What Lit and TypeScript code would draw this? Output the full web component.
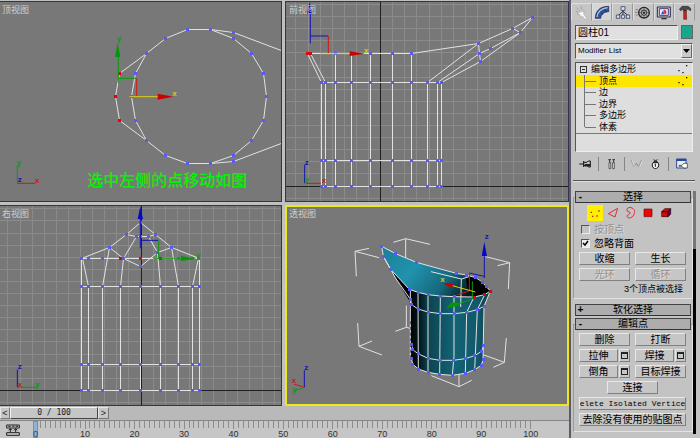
import { LitElement, html, svg, css } from "lit";
import { customElement, property } from "lit/decorators.js";
import { classMap } from "lit/directives/class-map.js";

type Pt = [number, number];

// Drawings use three units to a pixel; snap puts a coordinate on a pixel centre.
const snap = (v: number) => Math.floor(v / 3) * 3 + 1.5;
const snapAll = (pts: Pt[]): Pt[] => pts.map(([x, y]) => [snap(x), snap(y)]);
const join = (pts: Pt[]) => pts.map((p) => p.join(",")).join(" ");
const line = (pts: Pt[], cls = "wire") => svg`<polyline class=${cls} points=${join(snapAll(pts))}></polyline>`;
const dots = (pts: Pt[], cls = "vertex") =>
  snapAll(pts).map(([x, y]) => svg`<rect class=${cls} x=${x - 4.5} y=${y - 4.5} width="9" height="9"></rect>`);

const grid = (ox: number, oy: number) => {
  const out = [];
  for (let i = -30; i <= 40; i++) {
    if (i === 0) continue;
    const x = snap(ox + i * 36.3);
    const y = snap(oy + i * 36.3);
    out.push(svg`<path class="grid" d="M${x} -1500V2500M-1500 ${y}H2500"></path>`);
  }
  out.push(svg`<path class="axis" d="M${snap(ox)} -1500V2500M-1500 ${snap(oy)}H2500"></path>`);
  return out;
};

const ring: Pt[] = [
  [394, 290], [405, 220], [440, 159], [495, 115], [562, 89], [632, 89], [699, 115], [753, 159], [789, 220],
  [799, 290], [789, 361], [753, 422], [699, 466], [632, 491], [562, 491], [495, 466], [440, 422], [405, 361],
];

const topView = () => svg`
  ${line([...ring, ring[0]])}
  ${line([[440, 159], [358, 220], [346, 290], [358, 361], [440, 422]])}
  ${line([[632, 89], [699, 96], [860, 158]])}
  ${line([[632, 491], [699, 485], [860, 424]])}
  ${dots([...ring, [699, 96], [699, 485]])}
  ${dots([[358, 220], [346, 290], [358, 361]], "picked")}
  <path class="ln green" d="M355 250V160M355 235H409"></path>
  <path class="ln red" d="M410 235V290"></path>
  <path class="ln yellow" d="M388 290H475"></path>
  <path class="fill-green" d="M353 128L345 171H361Z"></path>
  <path class="fill-red" d="M520 290L473 281V299Z"></path>
  <text class="mark green-text" x="351" y="124">y</text>
  <text class="mark yellow-text" x="517" y="288">x</text>
  <path class="ln green" d="M52 549V495"></path>
  <path class="ln red" d="M52 550H106"></path>
  <text class="mark green-text" x="50" y="494">y</text>
  <text class="mark red-text" x="105" y="549">x</text>
  <text class="mark blue-text" x="53" y="547">z</text>
  <text class="note" x="262" y="559">选中左侧的点移动如图</text>`;

const frontXs = [112, 123, 153, 202, 260, 324, 382, 430, 461, 472];
const frontView = () => svg`
  ${grid(290, 558)}
  ${frontXs.map((x) => line([[x, 247], [x, 558]]))}
  ${[153, 202, 260, 324, 382].map((x) => line([[x, 161], [x, 247]]))}
  ${line([[70, 161], [382, 161], [584, 129], [686, 86], [745, 51], [710, 96], [590, 185], [472, 247]])}
  ${[247, 481, 558].map((y) => line([[112, y], [472, y]]))}
  ${line([[70, 161], [112, 247]])} ${line([[80, 161], [123, 247]])}
  ${line([[430, 247], [584, 129], [587, 161], [590, 185]])}
  ${line([[461, 247], [587, 161], [618, 145], [710, 96], [686, 86]])}
  ${[247, 481, 558].map((y) => dots(frontXs.map((x): Pt => [x, y])))}
  ${dots([[153, 161], [260, 161], [324, 161], [382, 161], [584, 129], [587, 161], [590, 185], [618, 145], [710, 96], [686, 86], [745, 51]])}
  ${dots([[70, 161], [80, 161]], "picked")}
  <path class="ln blue" d="M79 130V40M79 108H132"></path>
  <path class="ln red" d="M133 108V160"></path>
  <path class="ln yellow" d="M108 161H200"></path>
  <path class="fill-blue" d="M77 6L69 42H86Z"></path>
  <path class="fill-red" d="M243 161L197 154V168Z"></path>
  <text class="mark yellow-text" x="240" y="160">x</text>
  <path class="ln blue" d="M62 549V494"></path>
  <path class="ln red" d="M62 550H110"></path>
  <text class="mark blue-text" x="62" y="494">z</text>
  <text class="mark red-text" x="113" y="549">x</text>
  <text class="mark green-text" x="62" y="547">y</text>`;

const sideXs = [245, 266, 307, 361, 421, 482, 536, 577, 598];
const sideView = () => svg`
  ${grid(423, 562)}
  ${sideXs.map((x) => line([[x, 251], [x, 562]]))}
  ${[251, 485, 562].map((y) => line([[245, y], [598, y]]))}
  ${line([[245, 166], [598, 166]])}
  ${line([[245, 251], [245, 166], [328, 133], [379, 93], [421, 58], [467, 93], [515, 133], [598, 166], [598, 251]])}
  ${line([[248, 166], [266, 251]])} ${line([[595, 166], [577, 251]])}
  ${line([[328, 133], [307, 251]])} ${line([[515, 133], [536, 251]])}
  ${line([[328, 133], [371, 166], [421, 189], [471, 149], [515, 133]])}
  ${line([[361, 251], [371, 166], [410, 99], [379, 93]])}
  ${line([[482, 251], [471, 149], [446, 99], [467, 93]])}
  ${line([[410, 99], [446, 99]])}
  ${[251, 485, 562].map((y) => dots(sideXs.map((x): Pt => [x, y])))}
  ${dots([[245, 166], [266, 166], [307, 166], [371, 166], [536, 166], [577, 166], [596, 166], [328, 133], [515, 133], [379, 93], [467, 93], [410, 99], [446, 99], [421, 58], [421, 99], [471, 149], [421, 189]])}
  ${dots([[361, 166], [421, 166], [482, 166]], "picked")}
  <path class="ln blue" d="M421 136V46M421 112H475"></path>
  <path class="ln green" d="M476 112V165M460 166H545"></path>
  <path class="fill-blue" d="M421 10L413 48H429Z"></path>
  <path class="fill-green" d="M590 167L543 159V174Z"></path>
  <text class="mark green-text" x="588" y="166">y</text>
  <path class="ln blue" d="M52 552V500"></path>
  <path class="ln green" d="M52 553H108"></path>
  <text class="mark blue-text" x="53" y="498">z</text>
  <text class="mark green-text" x="105" y="551">y</text>
  <text class="mark red-text" x="53" y="551">x</text>`;

const rimFront: Pt[] = [[376, 259], [402, 268], [432, 275], [469, 279], [510, 281], [570, 282], [602, 275], [619, 264]];
const rimBack: Pt[] = [[293, 130], [335, 152], [397, 178], [517, 211], [548, 216], [575, 224], [595, 237], [606, 250], [619, 264]];
const spout: Pt[] = [[293, 130], [298, 160], [320, 199], [376, 259]];
const neck: Pt[] = [[380, 290], [383, 305], [402, 318], [432, 327], [470, 332], [510, 332], [548, 328], [580, 320], [600, 310]];
const belt: Pt[] = [[383, 425], [386, 440], [402, 452], [432, 466], [468, 472], [507, 472], [544, 467], [572, 458], [593, 445], [599, 428]];
const base: Pt[] = [[382, 465], [386, 483], [403, 498], [432, 508], [467, 514], [505, 517], [544, 511], [572, 500], [592, 487], [597, 470]];
const pour = (pts: Pt[], cls = "wire") => svg`<polyline class=${cls} points=${join(pts)}></polyline>`;

const perspectiveView = () => svg`
  <defs>
    <linearGradient id="outer">
      <stop offset="0" stop-color="#000"></stop>
      <stop offset=".12" stop-color="#02161b"></stop>
      <stop offset=".24" stop-color="#0c4552"></stop>
      <stop offset=".55" stop-color="#136274"></stop>
      <stop offset=".85" stop-color="#11596a"></stop>
      <stop offset="1" stop-color="#0a3b46"></stop>
    </linearGradient>
    <linearGradient id="inner" x2="1" y2=".35">
      <stop offset="0" stop-color="#1c7f98"></stop>
      <stop offset=".4" stop-color="#2092ad"></stop>
      <stop offset=".75" stop-color="#15677b"></stop>
      <stop offset="1" stop-color="#03181d"></stop>
    </linearGradient>
  </defs>
  <path class="wire" d="M255 136L213 145L285 164M213 145L217 220M328 118L365 107L438 124M365 107V165M593 158L677 179L641 188M677 179L673 258M221 360L225 430L264 414M225 430L294 456M367 308V373L334 385M367 373L382 377M667 405L661 478L628 493M661 478L597 455M525 475V551L442 518M525 551L563 532"></path>
  <polygon class="black" points="298,150 320,199 383,305 380,258"></polygon>
  <polygon points=${join([...rimFront, [600, 310], ...[...base].reverse()])} fill="url(#outer)"></polygon>
  <polygon points=${join([...rimBack, ...[...rimFront].reverse(), [320, 199], [298, 160]])} fill="url(#inner)"></polygon>
  <polygon class="black" points="545,225 558,220 580,225 597,238 617,264 602,275 571,281 553,264"></polygon>
  ${pour(rimBack)} ${pour(rimFront)} ${pour(spout)} ${pour(neck)} ${pour(belt)} ${pour(base)}
  ${pour([[298, 160], [335, 226], [380, 290]])}
  <path class="wire" d="M379 261V470M402 268L403 498M432 275V508M469 279L467 514M510 281V460L505 517M570 282L548 328L544 511M602 275L580 320L572 500M619 264L600 310L597 470M593 238L600 243"></path>
  <path class="wire" d="M441 206L532 228L556 221M532 228L530 312"></path>
  <path class="dash" d="M382 355V470"></path>
  ${dots([...rimBack.slice(0, 8), ...rimFront.slice(0, 5), ...neck, ...belt, ...base, [298, 160], [320, 199]])}
  ${dots([[570, 282], [602, 275], [619, 264]], "picked")}
  <path class="ln blue" d="M601 225V155M556 210L600 220"></path>
  <path class="ln red" d="M556 210V264L520 275"></path>
  <path class="ln green" d="M565 235V288L525 302"></path>
  <path class="ln yellow" d="M574 267L505 248"></path>
  <path class="fill-blue" d="M601 116L593 160H609Z"></path>
  <path class="fill-red" d="M476 241L509 240L503 256Z"></path>
  <path class="fill-green" d="M487 316L502 298L528 299L525 308Z"></path>
  <text class="mark yellow-text" x="469" y="236">x</text>
  <text class="mark blue-text" x="602" y="109">z</text>
  <path class="ln blue" d="M61 553V502"></path>
  <path class="ln red" d="M61 553L30 543"></path>
  <path class="ln green" d="M61 553L30 564"></path>
  <text class="mark blue-text" x="61" y="502">z</text>
  <text class="mark red-text" x="23" y="539">x</text>
  <text class="mark green-text" x="25" y="567">y</text>`;

const views = [
  { name: "顶视图", box: "0 6 843 597", draw: topView, cls: "edge" },
  { name: "前视图", box: "6 6 846 597", draw: frontView, cls: "" },
  { name: "右视图", box: "0 9 843 597", draw: sideView, cls: "edge" },
  { name: "透视图", box: "9 12 840 591", draw: perspectiveView, cls: "active" },
];

const tabs = [
  { name: "创建", icon: svg`<path d="M20 15L24 22L30 13L29 22L38 20L31 26L42 41L37 43L27 32L22 38L21 28L12 27L19 23Z" fill="#fff" stroke="#9a9a92" stroke-width="1.5"/><path d="M12 8L16 14M25 4V12M8 20H15" stroke="#8d8d86" stroke-width="2"/>` },
  { name: "修改", icon: svg`<path d="M4 40C4 18 18 4 44 4V20C31 20 21 27 20 40Z" fill="#33539b" stroke="#161e3c" stroke-width="2"/><path d="M9 36C11 20 22 10 41 8" fill="none" stroke="#a9c4ec" stroke-width="4"/><path d="M21 23L28 28M32 14L36 22" stroke="#17213d" stroke-width="2"/>` },
  { name: "层次", icon: svg`<path d="M24 15V30M24 19L10 31M24 19L38 31" stroke="#2d3550" stroke-width="3" fill="none"/><path d="M18 5H30V16H18ZM4 30H14V40H4ZM19 30H29V40H19ZM34 30H44V40H34Z" fill="#d9def0" stroke="#39435f" stroke-width="2.5"/>` },
  { name: "运动", icon: svg`<circle cx="27" cy="23" r="16" fill="#b5b5b5" stroke="#252525" stroke-width="4"/><circle cx="27" cy="23" r="8" fill="#ddd" stroke="#333" stroke-width="3"/><path d="M27 8V38M12 23H42M17 13L37 33M37 13L17 33" stroke="#333" stroke-width="1.5"/><circle cx="27" cy="23" r="3" fill="#222"/><path d="M2 14H9M0 22H8M2 30H9" stroke="#666" stroke-width="2"/>` },
  { name: "显示", icon: svg`<path d="M4 6H43V36H4Z" fill="#d6d6dd" stroke="#2b2b3c" stroke-width="3"/><path d="M10 11H37V31H10Z" fill="#eaf0ff" stroke="#3b3f88" stroke-width="3"/><path d="M15 28L22 14L24 28Z" fill="#3745c0"/><path d="M24 14C33 14 34 28 25 28Z" fill="#d22"/><path d="M16 41H32" stroke="#333" stroke-width="4"/>` },
  { name: "工具", icon: svg`<path d="M7 13L15 4H33L41 10V17L33 13H28V18H19V12L11 17Z" fill="#4c4c4c" stroke="#1b1b1b" stroke-width="1.5"/><path d="M20 17H28L29 43H20Z" fill="#c22525" stroke="#5a1010" stroke-width="1.5"/>` },
];

@customElement("view-port")
class ViewPort extends LitElement {
  @property() name = "";
  @property() box = "";
  @property({ attribute: false }) draw: () => unknown = () => "";

  static styles = css`
    :host { display: grid; position: relative; min-width: 0; min-height: 0; overflow: hidden; background: #787878;
      border: 1px solid #343450; box-sizing: border-box; }
    :host(.edge) { border-left: 0; }
    :host(.active) { border: 2px solid #f0e619; }
    .scene { display: block; width: 100%; height: 100%; min-height: 0; font-family: "Liberation Sans", sans-serif; }
    .name { position: absolute; left: 3px; top: 2px; color: #cfcfcf; font: 9px/12px "Liberation Sans", "Noto Sans CJK SC", sans-serif; }
    :host(.edge) .name { left: 2px; }
    :host(.active) .name { left: 2px; top: 1px; }
    .grid { stroke: #8b8b8b; stroke-width: 3; fill: none; }
    .axis { stroke: #202020; stroke-width: 3; fill: none; }
    .wire { stroke: #e2e2e2; stroke-width: 3; fill: none; stroke-linejoin: round; }
    .dash { stroke: #000; stroke-width: 5; fill: none; stroke-dasharray: 9 8; }
    .black { fill: #000; }
    .vertex { fill: #5a5af2; }
    .picked { fill: #d80808; }
    .ln { fill: none; stroke-width: 3; }
    .green { stroke: #0c9a0c; } .red { stroke: #d01818; } .yellow { stroke: #dccf10; } .blue { stroke: #1414b4; }
    .fill-green { fill: #05960a; } .fill-red { fill: #cc0000; } .fill-blue { fill: #0808c4; }
    .mark { font-size: 24px; font-weight: bold; }
    .green-text { fill: #0c9a0c; } .red-text { fill: #cc1818; } .yellow-text { fill: #d6cb10; } .blue-text { fill: #1414b4; }
    .note { fill: #0af00a; font-size: 48px; font-weight: 500; font-family: "Noto Sans CJK SC", sans-serif; }
  `;

  render() {
    return html`<svg class="scene" viewBox=${this.box} role="img" aria-label=${this.name}>${this.draw()}</svg>
      <span class="name">${this.name}</span>`;
  }
}

@customElement("time-line")
class TimeLine extends LitElement {
  static styles = css`
    :host { display: block; background: #c6c6c6; font: 9px/9px "Liberation Sans", sans-serif; color: #333; }
    .slider { display: flex; height: 13px; background: #b9b9b9; border-bottom: 1px solid #858585; padding-top: 1px; box-sizing: content-box; }
    button { font: 9px/10px "Liberation Sans", sans-serif; color: #222; background: #c6c6c6; border: 1px solid; border-color: #e6e6e6 #777 #777 #e6e6e6; padding: 0; height: 12px; width: 11px; }
    .thumb { width: 88px; border-color: #f2f2f2 #444 #444 #f2f2f2; font-family: "DejaVu Sans Mono", monospace; font-size: 8px; }
    .prev { width: 10px; }
    .track { display: flex; height: 17px; }
    .curve { width: 20px; margin: 0 7px 0 6px; border: 0; background: none; height: 17px; }
    .curve svg { display: block; width: 14px; height: 13px; }
    .ticks { display: flex; flex: 1; margin: 0 35px 0 0; list-style: none; padding: 0; }
    .tick { flex: 1 1 0; min-width: 0; display: flex; flex-direction: column; align-items: center; gap: 1px; white-space: nowrap; }
    .tick::before { content: ""; width: 1px; height: 7px; flex: none; background: #8c8c8c; }
    .major::before { height: 8px; }
    .now { background: #8fb2d6; box-shadow: inset 0 0 0 1px #6b93bd; color: #1d4c80; }
    .now::before { background: none; }
  `;

  render() {
    return html`
      <div class="slider">
        <button class="prev" aria-label="上一帧">&lt;</button>
        <button class="thumb">0 / 100</button>
        <button aria-label="下一帧">&gt;</button>
      </div>
      <div class="track">
        <button class="curve" aria-label="曲线编辑器">
          <svg viewBox="0 0 42 39"><path d="M2 6H40V15H2ZM2 29H40V37H2Z" fill="none" stroke="#222" stroke-width="3"/><path d="M7 10H14M19 10H25M29 10H36M13 17V28M29 17V28M8 22L13 17L18 22M24 22L29 17L34 22" fill="none" stroke="#222" stroke-width="3"/></svg>
        </button>
        <ul class="ticks">
          ${Array.from({ length: 101 }, (_, i) => html`<li class=${classMap({ tick: true, major: i % 10 === 0, now: i === 0 })}>${i % 10 === 0 ? i : ""}</li>`)}
        </ul>
      </div>`;
  }
}

@customElement("command-panel")
class CommandPanel extends LitElement {
  static styles = css`
    :host { display: block; background: #c3c3c3; border-left: 2px solid #5c5c66; box-sizing: border-box; padding: 3px 7px 0 4px;
      font: 10px/12px "Liberation Sans", "Noto Sans CJK SC", sans-serif; color: #000; overflow: hidden; }
    * { box-sizing: border-box; }
    svg { display: block; fill: none; }
    button { font: inherit; color: inherit; padding: 0; margin: 0; background: #c6c6c6; border: 1px solid; border-color: #e8e8e8 #808080 #808080 #e8e8e8; }
    button:disabled { color: #929292; text-shadow: 1px 1px #dedede; }
    .tabs { display: grid; grid-template-columns: repeat(6, 1fr); height: 18px; margin: 0 -2px 4px -4px; }
    .tab { display: grid; place-items: center; border-color: #dedede #9a9a9a #c3c3c3 #dedede; }
    .tab svg { width: 16px; height: 15px; }
    .current { background: #d6d6d6; }
    .name-row { display: flex; gap: 3px; height: 15px; margin-bottom: 3px; }
    .name { flex: 1; min-width: 0; font: inherit; padding: 0 2px; background: #e0e0e0; border: 1px solid; border-color: #555 #eee #eee #555; }
    .swatch { width: 12px; background: #19a68c; border-color: #666; margin: 0 0 1px; }
    .pick { position: relative; height: 16px; margin-bottom: 3px; }
    select { appearance: none; width: 100%; height: 16px; font: 8px/12px "Liberation Sans", sans-serif; padding: 0 2px; margin: 0; border-radius: 0;
      background: #e0e0e0; border: 1px solid; border-color: #555 #eee #eee #555; color: #000; display: block; }
    .arrow { position: absolute; right: 1px; top: 1px; width: 11px; height: 14px; background: #cacaca; border: 1px solid; border-color: #f2f2f2 #666 #666 #f2f2f2; pointer-events: none; }
    .stack { height: 90px; background: #dedede; border: 1px solid; border-color: #555 #eee #eee #555; font-size: 9px; line-height: 11px; }
    .tree, .tree ul { list-style: none; margin: 0; padding: 0; }
    .tree { padding-top: 1px; border-bottom: 1px solid #777; }
    .item { display: flex; align-items: center; height: 11px; padding-right: 3px; }
    .tree ul .item { height: 12px; }
    .tree ul .item:nth-child(even) { height: 11px; }
    .item > span { flex: 1; }
    .box { width: 7px; height: 7px; margin: 0 4px; border: 1px solid #333; background: linear-gradient(#333, #333) center / 3px 1px no-repeat; }
    .branch { width: 12px; margin: 0 3px 0 8px; align-self: stretch; border-left: 1px solid #777; background: linear-gradient(#777, #777) center / 100% 1px no-repeat; }
    .last .branch { border-image: linear-gradient(#777 50%, transparent 50%) 1; border-width: 0 0 0 1px; border-style: solid; }
    .chosen { background: #ffe600; }
    .dots { width: 12px; height: 11px; }
    .tools { display: flex; justify-content: space-between; align-items: center; height: 16px; margin: 4px 5px 0 4px; }
    .tools button { border: 0; background: none; }
    .tools svg { width: 13px; height: 12px; }
    .bar { width: 1px; height: 14px; background: #858585; }
    .rule { height: 2px; border: 0; border-top: 1px solid #555; border-bottom: 1px solid #e0e0e0; margin: 8px -2px 9px -2px; }
    .rollouts { display: flex; margin: 0 -3px 0 -2px; }
    .list { flex: 1; min-width: 0; }
    .scroll { width: 3px; background: linear-gradient(#777 58px, #000 58px); height: 243px; }
    fieldset { min-width: 0; margin: 0 0 5px; padding: 0 1px 1px; border: 1px solid; border-color: #9a9a9a #e2e2e2 #e2e2e2 #9a9a9a; }
    .closed { border-color: transparent; border-bottom: 0; padding-bottom: 0; margin-bottom: 2px; }
    legend { width: 100%; padding: 0; }
    .head { display: flex; align-items: center; justify-content: center; width: 100%; height: 12px; line-height: 10px; background: #adadad; border-color: #444 #444 #333 #444; }
    .head i { width: 9px; font-style: normal; font-weight: bold; }
    .head span { flex: 1; padding-right: 9px; }
    .body { display: grid; grid-template-columns: 1fr 1fr; gap: 3px 5px; padding: 2px 5px 0 4px; }
    .body button { height: 13px; line-height: 11px; min-width: 0; overflow: hidden; white-space: nowrap; }
    .wide { grid-column: 1 / -1; }
    .levels { display: flex; justify-content: space-between; padding: 0 12px 0 8px; height: 16px; }
    .levels button { width: 16px; height: 16px; border: 0; background: none; }
    .levels .on { background: #ffef00; }
    .levels svg { width: 16px; height: 16px; }
    label { display: flex; align-items: center; gap: 4px; height: 11px; padding-left: 2px; }
    .off { color: #929292; text-shadow: 1px 1px #dedede; }
    input[type="checkbox"] { appearance: none; width: 9px; height: 9px; margin: 0; border: 1px solid; border-color: #555 #eee #eee #555; background: #e6e6e6; }
    input:disabled { background: #c3c3c3; }
    input:checked { background: #eee url("data:image/svg+xml,%3Csvg xmlns='http://www.w3.org/2000/svg' viewBox='0 0 7 7'%3E%3Cpath d='M1 3L3 5L6 1' fill='none' stroke='%23000' stroke-width='1.5'/%3E%3C/svg%3E"); }
    .count { text-align: right; font-size: 9px; line-height: 11px; padding-right: 3px; margin: 0; height: 13px; }
    .pair { display: flex; gap: 1px; }
    .pair button:first-child { flex: 1; }
    .body .set { width: 11px; display: grid; place-items: center; }
    .set::before { content: ""; width: 7px; height: 7px; border: 1px solid #222; border-top-width: 2px; box-sizing: border-box; }
    .half { grid-column: 1 / -1; justify-self: center; width: 51px; }
    .body .mono { display: flex; justify-content: center; font: 8px/11px "Liberation Mono", monospace; }
    .mono span { flex: none; }
    .points { padding-top: 3px; padding-bottom: 4px; }
  `;

  private dots = svg`<path d="M4 18H8V22H4ZM16 24H20V28H16ZM27 3H31V7H27Z" fill="#111"/>`;

  render() {
    return html`
      <nav class="tabs">
        ${tabs.map((t, i) => html`<button class=${classMap({ tab: true, current: i === 1 })} aria-label=${t.name}><svg viewBox="0 0 48 45">${t.icon}</svg></button>`)}
      </nav>
      <div class="name-row"><input class="name" aria-label="名称" value="圆柱01" /><button class="swatch" aria-label="颜色"></button></div>
      <div class="pick">
        <select aria-label="Modifier List"><option>Modifier List</option></select>
        <svg class="arrow" viewBox="0 0 9 12"><path d="M1 4H8L4.500 8Z" fill="#000"/></svg>
      </div>
      <div class="stack">
        <ul class="tree">
          <li>
            <div class="item"><i class="box"></i><span>编辑多边形</span><svg class="dots" viewBox="0 0 36 33">${this.dots}</svg></div>
            <ul>
              ${["顶点", "边", "边界", "多边形", "体素"].map((n, i) => html`
                <li class=${classMap({ item: true, chosen: i === 0, last: i === 4 })}>
                  <i class="branch"></i><span>${n}</span>
                  ${i === 0 ? html`<svg class="dots" viewBox="0 0 36 33">${this.dots}</svg>` : ""}
                </li>`)}
            </ul>
          </li>
        </ul>
      </div>
      <div class="tools">
        <button aria-label="锁定堆栈"><svg viewBox="0 0 39 36"><path d="M1 18H14M14 9V27M14 13H24L28 9H34V27H28L24 23H14" stroke="#111" stroke-width="3"/><path d="M17 18H33V25H17Z" fill="#222"/></svg></button>
        <i class="bar"></i>
        <button aria-label="显示最终结果"><svg viewBox="0 0 39 36"><path d="M10 5H18M22 5H30M14 5V14M26 5V14" stroke="#333" stroke-width="3"/><path d="M12 14H17V32H12ZM23 14H28V32H23Z" fill="#eee" stroke="#222" stroke-width="2"/></svg></button>
        <i class="bar"></i>
        <button aria-label="使唯一"><svg viewBox="0 0 39 36"><path d="M4 6L12 27L19 15L26 27L35 6" stroke="#8e8e8e" stroke-width="3"/><path d="M6 7L14 28M28 27L37 8" stroke="#eee" stroke-width="2"/></svg></button>
        <button aria-label="移除修改器"><svg viewBox="0 0 39 36"><path d="M12 14C8 18 9 31 19 32C30 31 31 18 27 14Z" fill="#f2f2f2" stroke="#111" stroke-width="3"/><path d="M12 14C15 9 24 9 27 14M14 5L20 9L25 4M19 17V26" stroke="#111" stroke-width="3"/></svg></button>
        <i class="bar"></i>
        <button aria-label="配置修改器集"><svg viewBox="0 0 39 36"><path d="M5 3H33V30H5Z" fill="#eee" stroke="#28489a" stroke-width="3"/><path d="M4 3H34V9H4Z" fill="#2349a6"/><path d="M12 22H21L26 16H37V30H26L21 25H12Z" fill="#fff" stroke="#222" stroke-width="2"/></svg></button>
      </div>
      <hr class="rule" />
      <div class="rollouts">
        <div class="list">
          <fieldset>
            <legend><button class="head"><i>-</i><span>选择</span></button></legend>
            <div class="body">
              <div class="levels wide">
                <button class="on" aria-label="顶点"><svg viewBox="0 0 48 48"><path d="M11 20H15V24H11ZM34 16H38V20H34ZM15 32H19V36H15ZM28 31H32V35H28Z" fill="#d01010"/></svg></button>
                <button aria-label="边"><svg viewBox="0 0 48 48"><path d="M10 26L38 10L30 36Z" stroke="#dc2c3c" stroke-width="3"/></svg></button>
                <button aria-label="边界"><svg viewBox="0 0 48 48"><path d="M13 19C8 9 19 5 27 9C37 13 37 25 30 33C24 41 12 40 12 33C13 28 21 30 21 23C20 17 15 23 13 19Z" stroke="#dc2c3c" stroke-width="3"/></svg></button>
                <button aria-label="多边形"><svg viewBox="0 0 48 48"><path d="M12 12H36V35H12Z" fill="#f00505" stroke="#601010" stroke-width="2"/></svg></button>
                <button aria-label="体素"><svg viewBox="0 0 48 48"><path d="M11 20L20 11H38V27L31 35H11Z" fill="#d00808" stroke="#300" stroke-width="2"/><path d="M31 20L38 12V27L31 35Z" fill="#3a1278"/><path d="M11 20H30V35M30 20L38 11" stroke="#200" stroke-width="3"/></svg></button>
              </div>
              <label class="wide off"><input type="checkbox" disabled />按顶点</label>
              <label class="wide"><input type="checkbox" checked />忽略背面</label>
              <button>收缩</button><button>生长</button>
              <button disabled>光环</button><button disabled>循环</button>
              <p class="count wide">3个顶点被选择</p>
            </div>
          </fieldset>
          <fieldset class="closed"><legend><button class="head"><i>+</i><span>软化选择</span></button></legend></fieldset>
          <fieldset>
            <legend><button class="head"><i>-</i><span>编辑点</span></button></legend>
            <div class="body points">
              <button>删除</button><button>打断</button>
              <div class="pair"><button>拉伸</button><button class="set" aria-label="拉伸设置"></button></div>
              <div class="pair"><button>焊接</button><button class="set" aria-label="焊接设置"></button></div>
              <div class="pair"><button>倒角</button><button class="set" aria-label="倒角设置"></button></div>
              <button>目标焊接</button>
              <button class="half">连接</button>
              <button class="wide mono"><span>Delete Isolated Vertices</span></button>
              <button class="wide">去除没有使用的贴图点</button>
            </div>
          </fieldset>
        </div>
        <div class="scroll"></div>
      </div>`;
  }
}

@customElement("app-root")
class AppRoot extends LitElement {
  static styles = css`
    :host { display: grid; grid-template-columns: minmax(0, 1fr) 131px; min-height: 100vh; background: #c3c3c3; }
    .work { display: grid; grid-template-rows: minmax(0, 1fr) auto; min-width: 0; }
    .views { display: grid; grid-template: repeat(2, minmax(0, 1fr)) / 141fr 142fr; gap: 3px; padding-top: 1px; background: #c0c0c0; }
  `;

  render() {
    return html`
      <main class="work">
        <div class="views">
          ${views.map((v) => html`<view-port class=${v.cls} .name=${v.name} .box=${v.box} .draw=${v.draw}></view-port>`)}
        </div>
        <time-line></time-line>
      </main>
      <command-panel></command-panel>`;
  }
}
